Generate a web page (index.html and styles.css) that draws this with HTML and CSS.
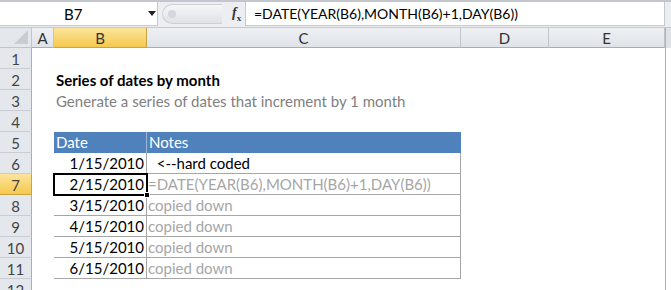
FILE: index.html
```html
<!DOCTYPE html>
<html>
<head>
<meta charset="utf-8">
<link rel="stylesheet" href="styles.css">
</head>
<body>
<div class="app">
  <div class="topbar">
    <div class="namebox">
      <span class="name">B7</span>
      <svg class="arrow" width="8" height="5" viewBox="0 0 8 5"><path d="M0 0h8L4 5z" fill="#222"/></svg>
    </div>
    <div class="mid">
      <div class="pill"><span class="knob"></span></div>
      <span class="fx"><i>f</i><sub>x</sub></span>
    </div>
    <div class="formula">=DATE(YEAR(B6),MONTH(B6)+1,DAY(B6))</div>
  </div>
  <div class="sheet">
    <div class="corner"><svg width="14" height="14" viewBox="0 0 14 14"><path d="M14 0V14H0z" fill="#c9ccd1"/></svg></div>
    <div class="ch">A</div>
    <div class="ch sel">B</div>
    <div class="ch">C</div>
    <div class="ch">D</div>
    <div class="ch">E</div>
    <div class="edge"></div>

    <div class="rh">1</div><div class="c"></div><div class="c"></div><div class="c"></div><div class="c"></div><div class="c"></div><div class="edge"></div>
    <div class="rh">2</div><div class="c"></div><div class="c title span2">Series of dates by month</div><div class="c"></div><div class="c"></div><div class="edge"></div>
    <div class="rh">3</div><div class="c"></div><div class="c sub span2">Generate a series of dates that increment by 1 month</div><div class="c"></div><div class="c"></div><div class="edge"></div>
    <div class="rh">4</div><div class="c"></div><div class="c"></div><div class="c"></div><div class="c"></div><div class="c"></div><div class="edge"></div>
    <div class="rh">5</div><div class="c"></div><div class="c th">Date</div><div class="c th th2">Notes</div><div class="c"></div><div class="c"></div><div class="edge"></div>
    <div class="rh">6</div><div class="c"></div><div class="c td num">1/15/2010</div><div class="c td note">&nbsp;&nbsp;&lt;--hard coded</div><div class="c"></div><div class="c"></div><div class="edge"></div>
    <div class="rh sel">7</div><div class="c"></div><div class="c td num active">2/15/2010<span class="handle"></span></div><div class="c td grey">=DATE(YEAR(B6),MONTH(B6)+1,DAY(B6))</div><div class="c"></div><div class="c"></div><div class="edge"></div>
    <div class="rh">8</div><div class="c"></div><div class="c td num">3/15/2010</div><div class="c td grey">copied down</div><div class="c"></div><div class="c"></div><div class="edge"></div>
    <div class="rh">9</div><div class="c"></div><div class="c td num">4/15/2010</div><div class="c td grey">copied down</div><div class="c"></div><div class="c"></div><div class="edge"></div>
    <div class="rh">10</div><div class="c"></div><div class="c td num">5/15/2010</div><div class="c td grey">copied down</div><div class="c"></div><div class="c"></div><div class="edge"></div>
    <div class="rh">11</div><div class="c"></div><div class="c td num">6/15/2010</div><div class="c td grey">copied down</div><div class="c"></div><div class="c"></div><div class="edge"></div>
    <div class="rh">12</div><div class="c"></div><div class="c"></div><div class="c"></div><div class="c"></div><div class="c"></div><div class="edge"></div>
  </div>
</div>
</body>
</html>
```
FILE: styles.css
```css
* { box-sizing: border-box; }
html, body { margin: 0; padding: 0; background: #fff; overflow: hidden; }
body { font-family: Lato, "Liberation Sans", sans-serif; color: #000; }
.app { width: 671px; height: 290px; overflow: hidden; background: #fff; }

.topbar {
  display: flex;
  height: 28px;
  border-top: 2px solid #c3c7cd;
  background: #eceef1;
  border-bottom: 1px solid #c5c9cf;
}
.namebox {
  width: 158px;
  height: 24px;
  background: #fff;
  border-right: 1px solid #c5c9cf;
  border-bottom: 1px solid #c5c9cf;
  display: flex;
  align-items: center;
  position: relative;
}
.name { font-size: 15px; margin-left: 64px; width: 80px; }
.arrow { margin-left: 4px; }
.mid { width: 87px; display: flex; align-items: center; height: 24px; }
.pill {
  margin-left: 4px;
  width: 60px;
  height: 20px;
  border-radius: 10px 0 0 10px;
  background: linear-gradient(#f5f6f7, #dfe2e6);
  border: 1px solid #cdd1d6;
  border-right: none;
  display: flex;
  align-items: center;
}
.knob { width: 8px; height: 8px; border-radius: 50%; background: #d4d7db; margin-left: 5px; }
.fx { font-family: "Liberation Serif", serif; font-size: 14px; font-weight: bold; margin-left: 10px; color: #333; }
.fx sub { font-size: 9px; }
.formula {
  flex: 1;
  height: 24px;
  background: #fff;
  border-left: 1px solid #c5c9cf;
  border-bottom: 1px solid #c5c9cf;
  font-size: 14px;
  padding-left: 8px;
  line-height: 24px;
  margin-right: 6px;
  border-right: 1px solid #c5c9cf;
}

.sheet {
  display: grid;
  grid-template-columns: 32px 22px 93px 314px 88px 116px 1fr;
  grid-template-rows: 20px repeat(12, 21px);
}
.corner, .ch, .rh {
  background: #e4e8ed;
  color: #333;
  font-size: 14px;
  display: flex;
  align-items: center;
  justify-content: center;
}
.corner { border-right: 1px solid #c0c5cc; border-bottom: 1px solid #c0c5cc; justify-content: flex-end; align-items: flex-end; padding: 0 3px 3px 0; }
.ch { border-right: 1px solid #c0c5cc; border-bottom: 1px solid #a8aeb6; background: linear-gradient(#eef0f3, #dfe3e8); font-size: 15px; }
.ch.sel, .rh.sel { background: linear-gradient(#fbe49a, #f6c94f); border-color: #c9a33f; }
.rh { border-right: 1px solid #a8aeb6; border-bottom: 1px solid #c9ced4; font-size: 15px; padding-top: 1px; color: #444; }
.edge { background: #fff; border-left: 1px solid #aab0b7; }
.sheet > .edge:nth-child(7) { background: #dfe3e8; }

.c { font-size: 15px; line-height: 20px; white-space: nowrap; position: relative; }
.span2 { grid-column: span 2; }
.title { font-weight: bold; padding-left: 2px; line-height: 22px; }
.sub { color: #7f7f7f; padding-left: 2px; line-height: 22px; }
.th { background: #4f81bd; color: #fff; padding-left: 2px; border-right: 1px solid #9db6d6; }
.th2 { border-right: 1px solid #4f81bd; }
.td { border-bottom: 1px solid #a6a6a6; border-right: 1px solid #a6a6a6; }
.sheet > .td:nth-child(7n+3) { border-left: 1px solid #a6a6a6; }
.num { text-align: right; padding-right: 2px; }
.note { padding-left: 2px; }
.grey { color: #a6a6a6; padding-left: 1px; }
.active { outline: 2px solid #000; outline-offset: -1px; z-index: 2; }
.handle {
  position: absolute;
  right: -4px;
  bottom: -4px;
  width: 6px;
  height: 6px;
  background: #000;
  border: 1px solid #fff;
}
```
